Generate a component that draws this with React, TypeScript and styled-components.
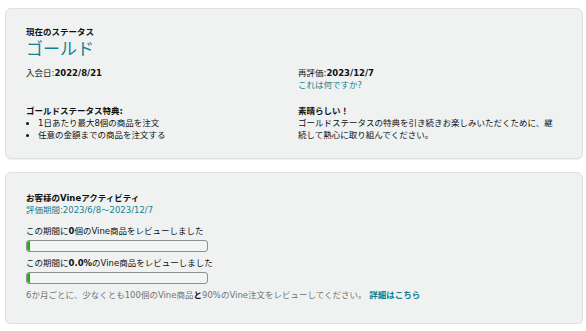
import React from 'react';
import styled, { createGlobalStyle } from 'styled-components';

const GlobalStyle = createGlobalStyle`
  html, body {
    margin: 0;
    padding: 0;
    background: #ffffff;
  }
  body {
    font-family: "DejaVu Sans", Verdana, "Noto Sans CJK JP", sans-serif;
    font-size: 8.5px;
    line-height: 12px;
    color: #0f1111;
  }
`;

const Page = styled.div`
  width: 586px;
  padding: 8px 3px 0 5px;
  box-sizing: border-box;
  display: flex;
  flex-direction: column;
  gap: 13px;
`;

const Card = styled.section<{ $height: number }>`
  background-color: #f0f2f2;
  border: 1px solid #dde1e1;
  border-radius: 6px;
  box-shadow: 0 1px 1px rgba(0, 0, 0, 0.06);
  padding: 17px 20px 0 20px;
  height: ${(p) => p.$height}px;
  box-sizing: border-box;
`;

const Label = styled.div`
  font-weight: bold;
  font-size: 8.5px;
  line-height: 12px;
`;

const StatusName = styled.div`
  color: #137f8f;
  font-size: 17px;
  line-height: 22px;
  margin-bottom: 7px;
`;

const Columns = styled.div<{ $gap?: number }>`
  display: grid;
  grid-template-columns: 1fr 1fr;
  column-gap: 8px;
  margin-top: ${(p) => p.$gap ?? 0}px;
`;

const Side = styled.div`
  padding-right: 6px;
`;

const Text = styled.div<{ $muted?: boolean }>`
  color: ${(p) => (p.$muted ? '#6f7373' : '#0f1111')};
`;

const Strong = styled.span`
  font-weight: bold;
`;

const Link = styled.a<{ $bold?: boolean }>`
  color: #137f8f;
  text-decoration: none;
  font-weight: ${(p) => (p.$bold ? 'bold' : 'normal')};
  cursor: pointer;
`;

const Benefits = styled.ul`
  margin: 0;
  padding: 0 0 0 12px;
  list-style: disc;
`;

const Period = styled.div`
  color: #137f8f;
  margin-bottom: 9px;
`;

const Metric = styled.div`
  display: flex;
  flex-direction: column;
  gap: 3px;
  margin-bottom: 5px;
`;

const Track = styled.div`
  width: 182px;
  height: 12px;
  box-sizing: border-box;
  border: 1px solid #8e9292;
  border-radius: 3px;
  background: #f3f4f4;
  overflow: hidden;
`;

const Fill = styled.div`
  height: 100%;
  background: #1fb30a;
  border-radius: 2px 0 0 2px;
`;

const Progress = ({ value }: { value: number }) => (
  <Track>
    <Fill style={{ width: `${Math.max(value, 1.5)}%` }} />
  </Track>
);

export default function App() {
  return (
    <>
      <GlobalStyle />
      <Page>
        <Card $height={151}>
          <Label>現在のステータス</Label>
          <StatusName>ゴールド</StatusName>
          <Columns>
            <Text>
              入会日:<Strong>2022/8/21</Strong>
            </Text>
            <Side>
              <Text>
                再評価:<Strong>2023/12/7</Strong>
              </Text>
              <Link>これは何ですか?</Link>
            </Side>
          </Columns>
          <Columns $gap={14}>
            <div>
              <Label>ゴールドステータス特典:</Label>
              <Benefits>
                <li>1日あたり最大8個の商品を注文</li>
                <li>任意の金額までの商品を注文する</li>
              </Benefits>
            </div>
            <Side>
              <Label>素晴らしい！</Label>
              <Text>
                ゴールドステータスの特典を引き続きお楽しみいただくために、継続して熱心に取り組んでください。
              </Text>
            </Side>
          </Columns>
        </Card>

        <Card $height={152}>
          <Label style={{ marginTop: 2 }}>お客様のVineアクティビティ</Label>
          <Period>評価期間:2023/6/8～2023/12/7</Period>
          <Metric>
            <Text>
              この期間に<Strong>0</Strong>個のVine商品をレビューしました
            </Text>
            <Progress value={0} />
          </Metric>
          <Metric>
            <Text>
              この期間に<Strong>0.0%</Strong>のVine商品をレビューしました
            </Text>
            <Progress value={0} />
          </Metric>
          <Text $muted>
            6か月ごとに、少なくとも100個のVine商品<Strong style={{ color: '#0f1111' }}>と</Strong>90%のVine注文をレビューしてください。{' '}
            <Link $bold>詳細はこちら</Link>
          </Text>
        </Card>
      </Page>
    </>
  );
}
